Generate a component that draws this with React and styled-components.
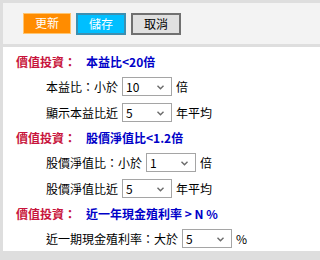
import React from "react";
import styled, { createGlobalStyle } from "styled-components";

const Global = createGlobalStyle`
  html, body { margin: 0; padding: 0; background: #dedede; }
  body { font-family: "Noto Sans CJK TC", "Noto Sans", sans-serif; font-size: 12px; color: #000; }
`;

const Page = styled.div`
  box-sizing: border-box;
  padding: 3px 0 0 3px;
  width: 100%;
  min-height: 100vh;
  display: flex;
  flex-direction: column;
  gap: 3px;
  background: #dedede;
`;

const Toolbar = styled.div`
  background: #f3f3f3;
  height: 41px;
  display: flex;
  align-items: center;
  padding-left: 20px;
  gap: 5px;
  box-sizing: border-box;
`;

const variants = {
  orange: { bg: "#ff8c00", border: "#ffc46e", color: "#fff", width: 48, height: 21 },
  blue: { bg: "#00bfff", border: "#3d8fb0", color: "#fff", width: 50, height: 22 },
  gray: { bg: "#e0e0e0", border: "#707070", color: "#000", width: 50, height: 22 },
};

const Button = styled.button`
  box-sizing: border-box;
  width: ${(p) => variants[p.$v].width}px;
  height: ${(p) => variants[p.$v].height}px;
  background: ${(p) => variants[p.$v].bg};
  color: ${(p) => variants[p.$v].color};
  border: ${(p) => (p.$v === "orange" ? 1 : 2)}px solid ${(p) => variants[p.$v].border};
  font-family: inherit;
  font-size: 12px;
  padding: 0;
  margin: 0;
  line-height: 1;
  margin-top: ${(p) => (p.$v === "orange" ? -1 : 0)}px;
`;

const Panel = styled.div`
  background: #fff;
  height: 204px;
  padding-top: 3px;
  box-sizing: border-box;
  display: flex;
  flex-direction: column;
`;

const Heading = styled.div`
  height: 24px;
  display: flex;
  align-items: center;
  padding-left: 13px;
  font-weight: bold;
  font-size: 12px;
`;

const Tag = styled.span`
  color: #c8143c;
  margin-right: 10px;
`;

const Title = styled.span`
  color: #0000c8;
`;

const Row = styled.div`
  height: 26px;
  display: flex;
  align-items: center;
  padding-left: 43px;
  gap: 4px;
`;

const SelectWrap = styled.div`
  position: relative;
  width: 50px;
  height: 19px;
`;

const Select = styled.select`
  appearance: none;
  -webkit-appearance: none;
  box-sizing: border-box;
  width: 100%;
  height: 100%;
  border: 1px solid #a5a5a5;
  border-radius: 0;
  background: #fff;
  font-family: inherit;
  font-size: 12px;
  padding: 0 0 0 3px;
  margin: 0;
  color: #000;
  outline: none;
`;

const Chevron = styled.svg`
  position: absolute;
  right: 8px;
  top: 8px;
  pointer-events: none;
`;

function Dropdown({ value, options }) {
  return (
    <SelectWrap>
      <Select defaultValue={value}>
        {options.map((o) => (
          <option key={o} value={o}>{o}</option>
        ))}
      </Select>
      <Chevron width="7" height="5" viewBox="0 0 7 5">
        <path d="M0.5 0.8 L3.5 3.8 L6.5 0.8" fill="none" stroke="#6a6a6a" strokeWidth="1.4" />
      </Chevron>
    </SelectWrap>
  );
}

const nums = ["1", "2", "3", "4", "5", "10", "15", "20"];

export default function App() {
  return (
    <>
      <Global />
      <Page>
        <Toolbar>
          <Button $v="orange">更新</Button>
          <Button $v="blue">儲存</Button>
          <Button $v="gray">取消</Button>
        </Toolbar>
        <Panel>
          <Heading>
            <Tag>價值投資：</Tag>
            <Title>本益比&lt;20倍</Title>
          </Heading>
          <Row>
            <span>本益比：小於</span>
            <Dropdown value="10" options={nums} />
            <span>倍</span>
          </Row>
          <Row>
            <span>顯示本益比近</span>
            <Dropdown value="5" options={nums} />
            <span>年平均</span>
          </Row>
          <Heading>
            <Tag>價值投資：</Tag>
            <Title>股價淨值比&lt;1.2倍</Title>
          </Heading>
          <Row>
            <span>股價淨值比：小於</span>
            <Dropdown value="1" options={nums} />
            <span>倍</span>
          </Row>
          <Row>
            <span>股價淨值比近</span>
            <Dropdown value="5" options={nums} />
            <span>年平均</span>
          </Row>
          <Heading>
            <Tag>價值投資：</Tag>
            <Title>近一年現金殖利率 &gt; N %</Title>
          </Heading>
          <Row>
            <span>近一期現金殖利率：大於</span>
            <Dropdown value="5" options={nums} />
            <span>%</span>
          </Row>
        </Panel>
      </Page>
    </>
  );
}
